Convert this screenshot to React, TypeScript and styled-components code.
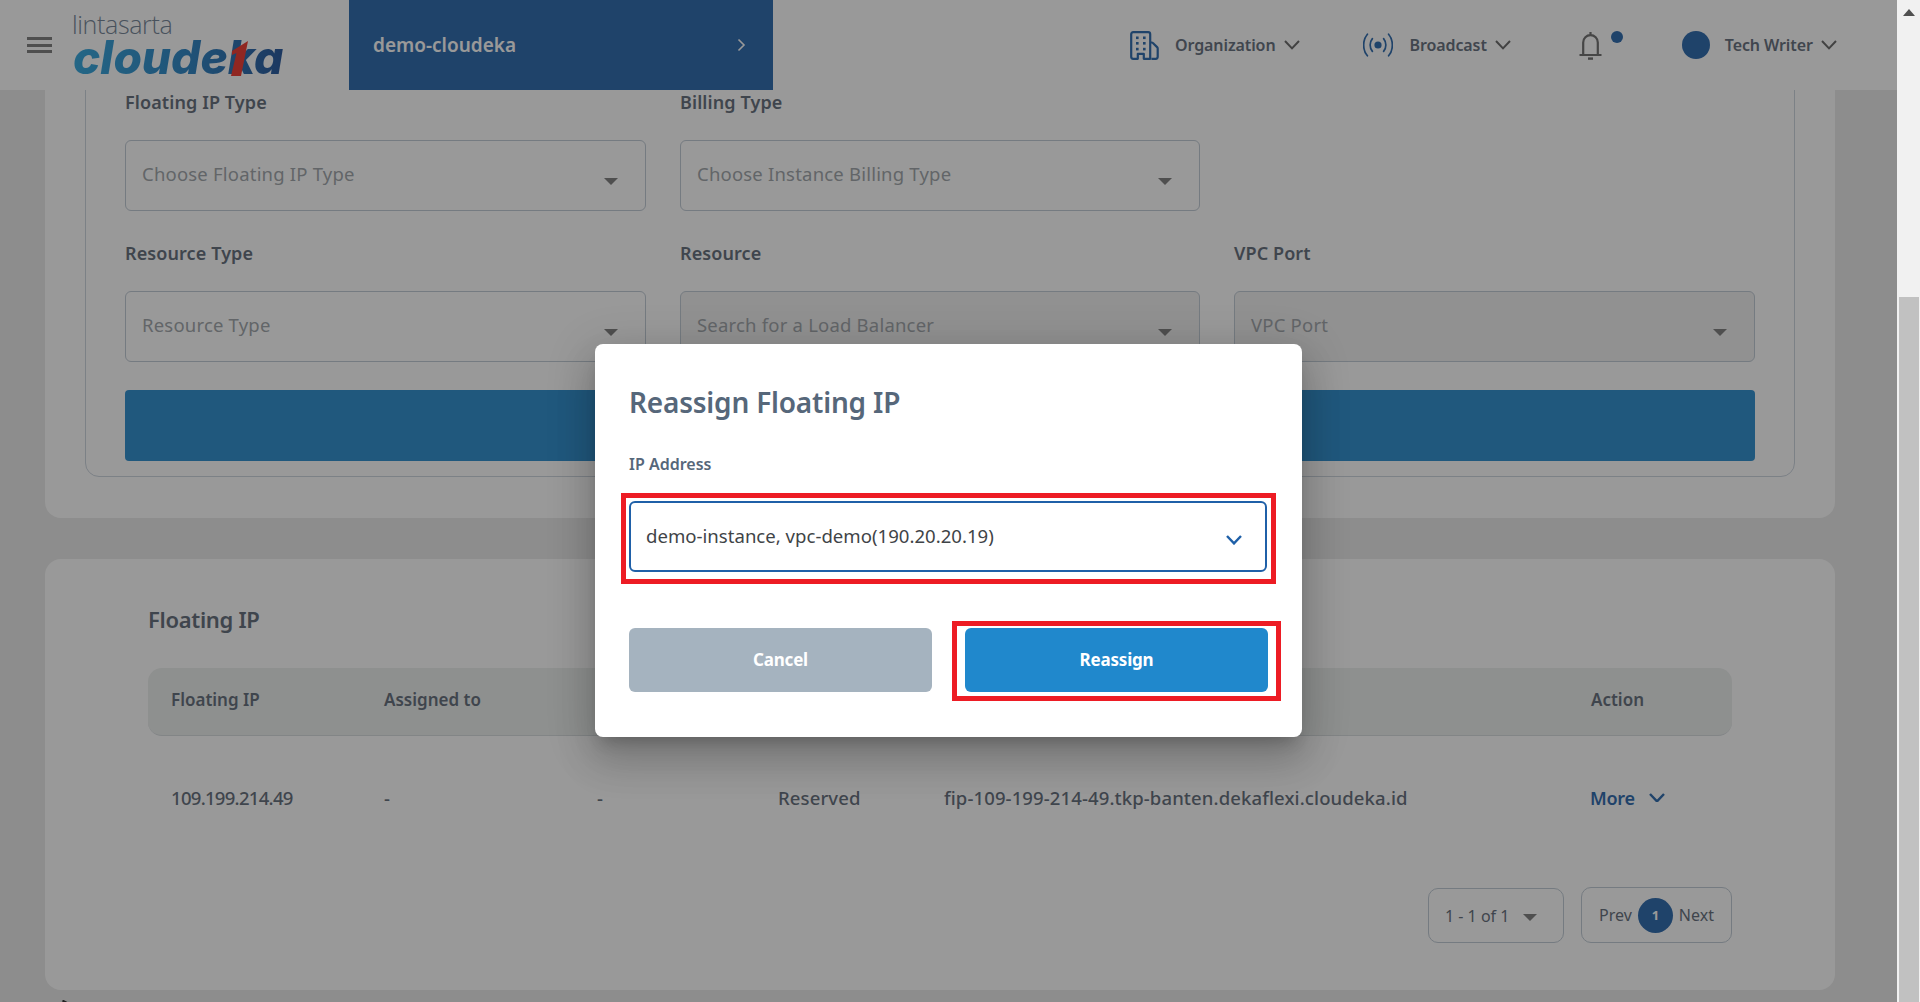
import React from "react";
import styled, { createGlobalStyle } from "styled-components";

const FONT = `"Noto Sans", "Open Sans", Arial, sans-serif`;

const Global = createGlobalStyle`
  html, body { margin: 0; padding: 0; height: 100%; overflow: hidden; }
  body { font-family: ${FONT}; }
  * { box-sizing: border-box; }
`;

const Page = styled.div`
  display: flex;
  width: 1920px;
  height: 1002px;
`;
const Viewport = styled.div`
  position: relative;
  flex: 1;
  height: 100%;
  overflow: hidden;
  background: #e9e9e9;
  display: flex;
  flex-direction: column;
`;
const Track = styled.div`
  width: 23px;
  height: 100%;
  background: #f1f1f1;
  display: flex;
  flex-direction: column;
  padding-left: 2px;
`;
const TrackArrow = styled.div`
  width: 0;
  height: 0;
  margin: 9px 0 0 4px;
  border-left: 6px solid transparent;
  border-right: 6px solid transparent;
  border-bottom: 7px solid #505050;
`;
const Thumb = styled.div`
  margin-top: auto;
  width: 20px;
  height: 705px;
  background: #c1c1c1;
`;

/* header */
const Header = styled.header`
  position: relative;
  z-index: 2;
  flex: none;
  height: 90px;
  background: #fff;
  display: flex;
  align-items: center;
  padding-left: 27px;
`;
const Burger = styled.div`
  width: 25px;
  height: 16px;
  display: flex;
  flex-direction: column;
  justify-content: space-between;
  margin-right: 21px;
  span { display: block; height: 3px; background: #777; }
`;
const Logo = styled.div`
  width: 276px;
  height: 90px;
  display: flex;
  flex-direction: column;
  padding-top: 10px;
`;
const LogoTop = styled.div`
  font-family: "Open Sans", sans-serif;
  font-weight: 300;
  font-size: 25px;
  line-height: 29px;
  letter-spacing: -0.35px;
  margin-left: -1px;
  color: #6b7c90;
`;
const LogoWord = styled.div`
  position: relative;
  width: 214px;
  height: 37px;
  font-family: Inter, sans-serif;
  font-weight: 800;
  font-style: italic;
  font-size: 46px;
  line-height: 37px;
  letter-spacing: 0;
  background: linear-gradient(90deg, #27a2dc 0%, #1f7cc0 55%, #184a94 100%);
  -webkit-background-clip: text;
  background-clip: text;
  color: transparent;
`;
const LogoStem = styled.svg`
  position: absolute;
  left: 157px;
  top: 1px;
`;
const Project = styled.div`
  width: 424px;
  height: 90px;
  background: #1f60a8;
  color: #fff;
  display: flex;
  align-items: center;
  justify-content: space-between;
  padding: 0 27px 1px 24px;
  font-weight: 600;
  font-size: 19px;
  letter-spacing: 0;
`;
const HeaderRight = styled.div`
  display: flex;
  align-items: center;
  height: 100%;
  flex: 1;
  padding-left: 357px;
`;
const NavItem = styled.div<{ $gap: number; $end: number }>`
  display: flex;
  align-items: center;
  gap: ${(p) => p.$gap}px;
  margin-right: ${(p) => p.$end}px;
`;
const NavLabel = styled.span<{ $after: number }>`
  font-weight: 600;
  font-size: 16px;
  letter-spacing: -0.1px;
  color: #5b6675;
  white-space: nowrap;
  padding-bottom: 1px;
  margin-right: ${(p) => p.$after}px;
`;
const Bell = styled.div`
  position: relative;
  width: 45px;
  height: 28px;
  margin-right: 59px;
`;
const BellDot = styled.span`
  position: absolute;
  top: 0;
  right: 0;
  width: 12px;
  height: 12px;
  border-radius: 50%;
  background: #1f60a8;
`;
const Avatar = styled.span`
  width: 28px;
  height: 28px;
  border-radius: 50%;
  background: #1f60a8;
`;

/* content */
const Card = styled.section<{ $first?: boolean }>`
  flex: none;
  margin: ${(p) => (p.$first ? "-40px 62px 0 45px" : "41px 62px 0 45px")};
  background: #fff;
  border-radius: 16px;
`;
const Group = styled.div`
  margin: 10px 40px 41px;
  padding: 29px 39px 15px;
  border: 1px solid #c9d2dc;
  border-radius: 14px;
  display: flex;
  flex-direction: column;
  gap: 28px;
`;
const FieldGrid = styled.div`
  display: grid;
  grid-template-columns: 521px 520px 521px;
  column-gap: 34px;
  row-gap: 30px;
`;
const FieldBox = styled.div`
  display: flex;
  flex-direction: column;
  gap: 26px;
`;
const FieldLabel = styled.label`
  font-weight: 600;
  font-size: 18px;
  line-height: 24px;
  letter-spacing: 0.1px;
  padding-bottom: 1px;
  margin-bottom: -1px;
  color: #5a6573;
`;
const SelectBox = styled.div<{ $disabled?: boolean }>`
  position: relative;
  height: 71px;
  border: 1px solid #bcc7d2;
  border-radius: 6px;
  background: ${(p) => (p.$disabled ? "#f0f0f0" : "#fff")};
  display: flex;
  align-items: center;
  padding: 0 16px 5px;
  font-size: 18.5px;
  letter-spacing: 0.2px;
  color: #9a9fa5;
`;
const Caret = styled.span`
  position: absolute;
  right: 27px;
  bottom: 25px;
  width: 0;
  height: 0;
  border-left: 7px solid transparent;
  border-right: 7px solid transparent;
  border-top: 7px solid #777;
`;
const WideButton = styled.div`
  height: 71px;
  border-radius: 4px;
  background: #2088cc;
`;
const CardTwoInner = styled.div`
  padding: 45px 103px 47px 103px;
  display: flex;
  flex-direction: column;
`;
const CardTitle = styled.h2`
  margin: 0 0 34px;
  font-weight: 600;
  font-size: 22px;
  line-height: 30px;
  letter-spacing: -0.3px;
  color: #5a6573;
`;
const GRID = "213px 213px 181px 166px 647px 1fr";
const TableHead = styled.div`
  display: grid;
  grid-template-columns: ${GRID};
  align-items: center;
  height: 68px;
  padding-left: 23px;
  padding-bottom: 4px;
  background: #ebeeed;
  border-radius: 14px;
  border-bottom: 1px solid #d5dadd;
  font-weight: 600;
  font-size: 17px;
  letter-spacing: 0;
  color: #5a6573;
`;
const TableRow = styled.div`
  display: grid;
  grid-template-columns: ${GRID};
  align-items: center;
  height: 123px;
  padding-left: 23px;
  font-weight: 500;
  font-size: 18.5px;
  letter-spacing: 0.12px;
  color: #5a6573;
`;
const IpCell = styled.span`
  letter-spacing: -0.7px;
`;
const MoreLink = styled.span`
  display: flex;
  align-items: center;
  gap: 14px;
  margin-left: -1px;
  font-weight: 600;
  font-size: 18px;
  letter-spacing: -0.3px;
  color: #1f60a8;
`;
const Pager = styled.div`
  margin-top: 28px;
  display: flex;
  justify-content: flex-end;
  align-items: flex-end;
  gap: 17px;
`;
const PageSize = styled.div`
  position: relative;
  width: 136px;
  height: 55px;
  border: 1px solid #bcc7d2;
  border-radius: 10px;
  display: flex;
  align-items: center;
  padding-left: 16px;
  font-size: 16px;
  color: #5a6573;
`;
const PageCaret = styled(Caret)`
  right: 26px;
  bottom: 21px;
`;
const PageNav = styled.div`
  width: 151px;
  height: 56px;
  border: 1px solid #bcc7d2;
  border-radius: 10px;
  display: flex;
  align-items: center;
  justify-content: center;
  gap: 6px;
  font-size: 16px;
  color: #5a6573;
`;
const PageDot = styled.span`
  width: 35px;
  height: 35px;
  border-radius: 50%;
  background: #1f60a8;
  color: #fff;
  font-weight: 700;
  font-size: 13px;
  display: flex;
  align-items: center;
  justify-content: center;
`;
const FootMark = styled.div`
  margin: 10px 0 0 62px;
  height: 8px;
  flex: none;
  line-height: 0;
`;

/* dialog */
const Overlay = styled.div`
  position: absolute;
  inset: 0;
  z-index: 5;
  background: rgba(33, 33, 33, 0.46);
  display: flex;
  justify-content: center;
  align-items: flex-start;
  padding-top: 344px;
`;
const Modal = styled.div`
  width: 707px;
  height: 393px;
  padding: 40px 35px 45px 34px;
  background: #fff;
  border-radius: 8px;
  box-shadow: 0 11px 15px -7px rgba(0, 0, 0, 0.2), 0 24px 38px 3px rgba(0, 0, 0, 0.14),
    0 9px 46px 8px rgba(0, 0, 0, 0.12);
  display: flex;
  flex-direction: column;
`;
const ModalTitle = styled.h3`
  margin: 0;
  font-weight: 600;
  font-size: 28px;
  line-height: 36px;
  letter-spacing: -0.2px;
  color: #56677a;
`;
const ModalLabel = styled.div`
  margin-top: 34px;
  font-weight: 600;
  font-size: 16px;
  line-height: 20px;
  color: #56677a;
`;
const Annotated = styled.div<{ $t: number; $r: number; $b: number; $l: number; $w: number; $above?: number }>`
  position: relative;
  margin-top: ${(p) => p.$above ?? 0}px;
  &::after {
    content: "";
    position: absolute;
    top: ${(p) => -p.$t}px;
    right: ${(p) => -p.$r}px;
    bottom: ${(p) => -p.$b}px;
    left: ${(p) => -p.$l}px;
    border: ${(p) => p.$w}px solid #ed1c24;
    pointer-events: none;
  }
`;
const IpSelect = styled.div`
  height: 71px;
  border: 2px solid #1f60a8;
  border-radius: 6px;
  display: flex;
  align-items: center;
  justify-content: space-between;
  padding: 0 23px 3px 15px;
  font-size: 18.6px;
  color: #3f4447;
`;
const SelectChevron = styled.span`
  display: flex;
  margin-top: 10px;
`;
const ButtonRow = styled.div`
  margin-top: 56px;
  display: grid;
  grid-template-columns: 303px 303px;
  column-gap: 33px;
`;
const Btn = styled.button<{ $primary?: boolean }>`
  width: 100%;
  height: 64px;
  border: 0;
  border-radius: 6px;
  padding: 0 0 2px;
  background: ${(p) => (p.$primary ? "#2088cc" : "#a5b3bf")};
  color: #fff;
  font-family: ${FONT};
  font-weight: 700;
  font-size: 17px;
  letter-spacing: -0.2px;
`;

const Chevron = ({ size = 16, color = "#5f5f5f", w = 2 }: { size?: number; color?: string; w?: number }) => (
  <svg width={size} height={size * 0.6} viewBox="0 0 16 9.6" fill="none">
    <polyline points="1,1 8,8.4 15,1" stroke={color} strokeWidth={w} />
  </svg>
);

const BuildingIcon = () => (
  <svg width="29" height="29" viewBox="0 0 29 29" fill="none" stroke="#1f60a8" strokeWidth="2.2" strokeLinejoin="round">
    <path d="M1.2 3.2a2 2 0 0 1 2-2h15a2 2 0 0 1 2 2v24.6H13.8v-5h-6v5H3.2a2 2 0 0 1-2-2z" />
    <path d="M20.4 11.5h1.4a2 2 0 0 1 1.6 1l3.7 3.6a2 2 0 0 1 .6 1.4v8.3a2 2 0 0 1-2 2h-4.3" />
    <g fill="#1f60a8" stroke="none">
      <rect x="6" y="5.5" width="2.6" height="2.6" />
      <rect x="13" y="5.5" width="2.6" height="2.6" />
      <rect x="6" y="11" width="2.6" height="2.6" />
      <rect x="13" y="11" width="2.6" height="2.6" />
      <rect x="6" y="16.8" width="2.6" height="2.6" />
      <rect x="13" y="16.8" width="2.6" height="2.6" />
    </g>
  </svg>
);

const BroadcastIcon = () => (
  <svg width="30" height="24" viewBox="0 0 30 24" fill="none" stroke="#1f60a8" strokeWidth="1.7" strokeLinecap="round">
    <circle cx="15" cy="12" r="3.6" fill="#1f60a8" stroke="none" />
    <path d="M9.4 5.6c-3 3.6-3 9.2 0 12.8" />
    <path d="M20.6 5.6c3 3.6 3 9.2 0 12.8" />
    <path d="M4.4 1.2c-5 6-5 15.6 0 21.6" />
    <path d="M25.6 1.2c5 6 5 15.6 0 21.6" />
  </svg>
);

const BellIcon = () => (
  <svg width="25" height="29" viewBox="0 0 25 29" fill="none" stroke="#666" strokeWidth="2.2" strokeLinejoin="round">
    <path d="M12.5 1v3M5.2 23V11.5a7.3 7.3 0 0 1 14.6 0V23M1.5 24h22" />
    <path d="M10 27.6h5" strokeWidth="2.4" />
  </svg>
);

const fields = [
  { label: "Floating IP Type", text: "Choose Floating IP Type" },
  { label: "Billing Type", text: "Choose Instance Billing Type" },
  null,
  { label: "Resource Type", text: "Resource Type" },
  { label: "Resource", text: "Search for a Load Balancer", disabled: true },
  { label: "VPC Port", text: "VPC Port", disabled: true },
];

export default function App() {
  return (
    <Page>
      <Global />
      <Viewport>
        <Header>
          <Burger>
            <span />
            <span />
            <span />
          </Burger>
          <Logo>
            <LogoTop>lintasarta</LogoTop>
            <LogoWord>
              cloudeka
              <LogoStem width="20" height="38" viewBox="0 0 20 38">
                <polygon points="2,11 18,1 11,36 1,36 6.5,13 2,15" fill="#ee2d24" />
              </LogoStem>
            </LogoWord>
          </Logo>
          <Project>
            <span>demo-cloudeka</span>
            <svg width="9" height="14" viewBox="0 0 9 14" fill="none">
              <polyline points="1.5,1.5 7,7 1.5,12.5" stroke="#fff" strokeWidth="1.6" />
            </svg>
          </Project>
          <HeaderRight>
            <NavItem $gap={16} $end={63}>
              <BuildingIcon />
              <NavLabel $after={-8}>Organization</NavLabel>
              <Chevron />
            </NavItem>
            <NavItem $gap={17} $end={67}>
              <BroadcastIcon />
              <NavLabel $after={-9}>Broadcast</NavLabel>
              <Chevron />
            </NavItem>
            <Bell>
              <BellIcon />
              <BellDot />
            </Bell>
            <NavItem $gap={15} $end={0}>
              <Avatar />
              <NavLabel $after={-7}>Tech Writer</NavLabel>
              <Chevron />
            </NavItem>
          </HeaderRight>
        </Header>

        <Card $first>
          <Group>
            <FieldGrid>
              {fields.map((f, i) =>
                f ? (
                  <FieldBox key={i}>
                    <FieldLabel>{f.label}</FieldLabel>
                    <SelectBox $disabled={f.disabled}>
                      {f.text}
                      <Caret />
                    </SelectBox>
                  </FieldBox>
                ) : (
                  <div key={i} />
                )
              )}
            </FieldGrid>
            <WideButton />
          </Group>
        </Card>

        <Card>
          <CardTwoInner>
            <CardTitle>Floating IP</CardTitle>
            <TableHead>
              <span>Floating IP</span>
              <span>Assigned to</span>
              <span />
              <span />
              <span />
              <span>Action</span>
            </TableHead>
            <TableRow>
              <IpCell>109.199.214.49</IpCell>
              <span>-</span>
              <span>-</span>
              <span>Reserved</span>
              <span>fip-109-199-214-49.tkp-banten.dekaflexi.cloudeka.id</span>
              <MoreLink>
                More
                <Chevron color="#1f60a8" w={2.4} />
              </MoreLink>
            </TableRow>
            <Pager>
              <PageSize>
                1 - 1 of 1
                <PageCaret />
              </PageSize>
              <PageNav>
                <span>Prev</span>
                <PageDot>1</PageDot>
                <span>Next</span>
              </PageNav>
            </Pager>
          </CardTwoInner>
        </Card>
        <FootMark>
          <svg width="8" height="6" viewBox="0 0 8 6" fill="none">
            <polyline points="0.5,0.5 6,3.5" stroke="#222" strokeWidth="2" />
          </svg>
        </FootMark>

        <Overlay>
          <Modal>
            <ModalTitle>Reassign Floating IP</ModalTitle>
            <ModalLabel>IP Address</ModalLabel>
            <Annotated $t={8} $r={9} $b={12} $l={8} $w={5} $above={27}>
              <IpSelect>
                <span>demo-instance, vpc-demo(190.20.20.19)</span>
                <SelectChevron>
                  <Chevron size={16} color="#1f60a8" w={2.4} />
                </SelectChevron>
              </IpSelect>
            </Annotated>
            <ButtonRow>
              <Btn>Cancel</Btn>
              <Annotated $t={7} $r={13} $b={9} $l={13} $w={5}>
                <Btn $primary>Reassign</Btn>
              </Annotated>
            </ButtonRow>
          </Modal>
        </Overlay>
      </Viewport>
      <Track>
        <TrackArrow />
        <Thumb />
      </Track>
    </Page>
  );
}
